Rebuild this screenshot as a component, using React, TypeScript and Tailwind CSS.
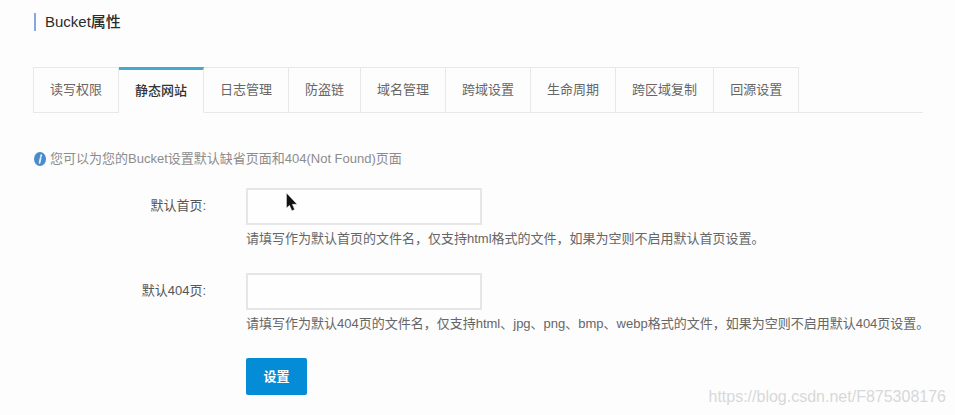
import clsx from 'clsx';

const tabs = [
  '读写权限',
  '静态网站',
  '日志管理',
  '防盗链',
  '域名管理',
  '跨域设置',
  '生命周期',
  '跨区域复制',
  '回源设置',
];

const fields = [
  {
    id: 'index-page',
    label: '默认首页:',
    help: '请填写作为默认首页的文件名，仅支持html格式的文件，如果为空则不启用默认首页设置。',
  },
  {
    id: 'error-page',
    label: '默认404页:',
    help: '请填写作为默认404页的文件名，仅支持html、jpg、png、bmp、webp格式的文件，如果为空则不启用默认404页设置。',
  },
];

function InfoIcon() {
  return (
    <svg className="w-3 h-4 shrink-0" viewBox="0 0 12 16" aria-hidden="true">
      <ellipse cx="6" cy="8" rx="6" ry="7" fill="#4a8ccb" />
      <path d="M7.2 4.2l-.2 1M6.6 7l-1 4.8" stroke="#e4eef8" strokeWidth="1.8" strokeLinecap="round" />
    </svg>
  );
}

function Cursor() {
  return (
    <svg className="absolute left-10 top-1 w-3 h-5 pointer-events-none" viewBox="0 0 12 20" aria-hidden="true">
      <path d="M.5 1v15l3-2.7 2.4 5.4 2.7-1.2-2.3-5.2h4.7z" fill="#111" stroke="#fff" strokeWidth="0.4" />
    </svg>
  );
}

export default function App() {
  return (
    <div className="relative min-h-screen bg-[#fdfdfd] pl-[34px] pr-8 pt-[13px] pb-4 text-[13px] leading-5 text-[#666] font-['Liberation_Sans','Noto_Sans_CJK_SC',sans-serif]">
      <h1 className="border-l-2 border-[#86a8e0] pl-[9px] text-[15px] leading-[18px] font-medium text-[#2b2b2b]">
        Bucket属性
      </h1>

      {/* Tabs */}
      <div role="tablist" className="mt-9 flex border-b border-[#e8e8e8]">
        {tabs.map((tab, i) => (
          <button
            key={tab}
            type="button"
            role="tab"
            aria-selected={i === 1}
            className={clsx(
              'h-[46px] shrink-0 -mb-px border-r border-[#e8e8e8] px-4 whitespace-nowrap',
              i === 0 && 'border-l -ml-px',
              i === 1
                ? 'border-t-3 border-t-[#41abc9] border-b border-b-[#fdfdfd] bg-[#fdfdfd] font-medium text-[#333]'
                : 'border-t border-b'
            )}
          >
            {tab}
          </button>
        ))}
      </div>

      <p className="mt-9 flex items-center gap-1 text-[#8c8c8c]">
        <InfoIcon />
        您可以为您的Bucket设置默认缺省页面和404(Not Found)页面
      </p>

      {/* Form */}
      <form className="mt-[19px] flex flex-col gap-6" onSubmit={(e) => e.preventDefault()}>
        {fields.map((field, i) => (
          <div key={field.id} className="flex gap-10">
            <label htmlFor={field.id} className="w-[172px] shrink-0 pt-2 text-right text-[#555]">
              {field.label}
            </label>
            <div className="relative">
              <input
                id={field.id}
                type="text"
                className="block h-[37px] w-[236px] border-2 border-[#e6e6e6] bg-[#fefefe] px-2 outline-none"
              />
              {i === 0 && <Cursor />}
              <p className="mt-1 whitespace-nowrap">{field.help}</p>
            </div>
          </div>
        ))}
        <button
          type="submit"
          className="ml-[212px] h-[37px] w-[61px] rounded-xs bg-[#058cd6] font-bold text-white"
        >
          设置
        </button>
      </form>

      <span className="absolute right-[9px] bottom-2 text-base leading-5 text-[#d8d8d8]">
        https://blog.csdn.net/F875308176
      </span>
    </div>
  );
}
